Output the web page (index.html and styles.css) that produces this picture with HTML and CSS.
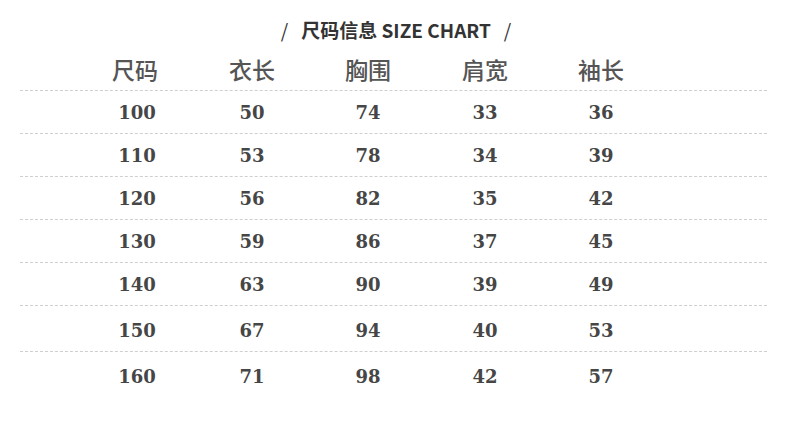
FILE: index.html
```html
<!DOCTYPE html>
<html lang="zh">
<head>
<meta charset="utf-8">
<link rel="stylesheet" href="styles.css">
</head>
<body>
<div class="page">
  <h1 class="title"><span class="slash">/</span><span class="title-text">尺码信息 SIZE CHART</span><span class="slash">/</span></h1>
  <div class="head row">
    <div>尺码</div><div>衣长</div><div>胸围</div><div>肩宽</div><div>袖长</div>
  </div>
  <div class="body">
    <div class="row data"><div>100</div><div>50</div><div>74</div><div>33</div><div>36</div></div>
    <div class="row data"><div>110</div><div>53</div><div>78</div><div>34</div><div>39</div></div>
    <div class="row data"><div>120</div><div>56</div><div>82</div><div>35</div><div>42</div></div>
    <div class="row data"><div>130</div><div>59</div><div>86</div><div>37</div><div>45</div></div>
    <div class="row data"><div>140</div><div>63</div><div>90</div><div>39</div><div>49</div></div>
    <div class="row data tall"><div>150</div><div>67</div><div>94</div><div>40</div><div>53</div></div>
    <div class="row data last"><div>160</div><div>71</div><div>98</div><div>42</div><div>57</div></div>
  </div>
</div>
</body>
</html>
```
FILE: styles.css
```css
html, body {
  margin: 0;
  padding: 0;
  background: #ffffff;
}
.page {
  width: 790px;
  height: 434px;
  box-sizing: border-box;
  padding-top: 16px;
}
.title {
  margin: 0;
  height: 26px;
  display: flex;
  justify-content: center;
  align-items: center;
  gap: 13px;
  font-family: "Noto Sans CJK SC", "Noto Sans", sans-serif;
  font-size: 19px;
  font-weight: 700;
  color: #333333;
  padding-left: 2px;
}
.slash {
  font-weight: 400;
  font-size: 19px;
}
.row {
  display: grid;
  grid-template-columns: 114px 116px 116px 118px 114px;
  margin: 0 23px 0 20px;
  padding-left: 60px;
}
.row > div {
  text-align: center;
}
.head {
  margin-top: 10px;
  height: 39px;
  box-sizing: border-box;
  padding-bottom: 6px;
  align-items: center;
  font-family: "Noto Sans CJK SC", "Noto Sans", sans-serif;
  font-size: 23px;
  font-weight: 500;
  color: #555555;
  border-bottom: 1px dashed #cfcfcf;
}
.head > div:first-child { transform: translateX(-2px); }
.data {
  height: 42px;
  align-items: center;
  font-family: "DejaVu Serif", "Liberation Serif", serif;
  font-weight: 700;
  font-size: 18px;
  color: #464646;
  border-bottom: 1px dashed #cfcfcf;
}
.data.tall {
  height: 45px;
  padding-top: 3px;
  box-sizing: border-box;
  height: 46px;
}
.data.last {
  border-bottom: none;
  margin-top: 3px;
}
```
